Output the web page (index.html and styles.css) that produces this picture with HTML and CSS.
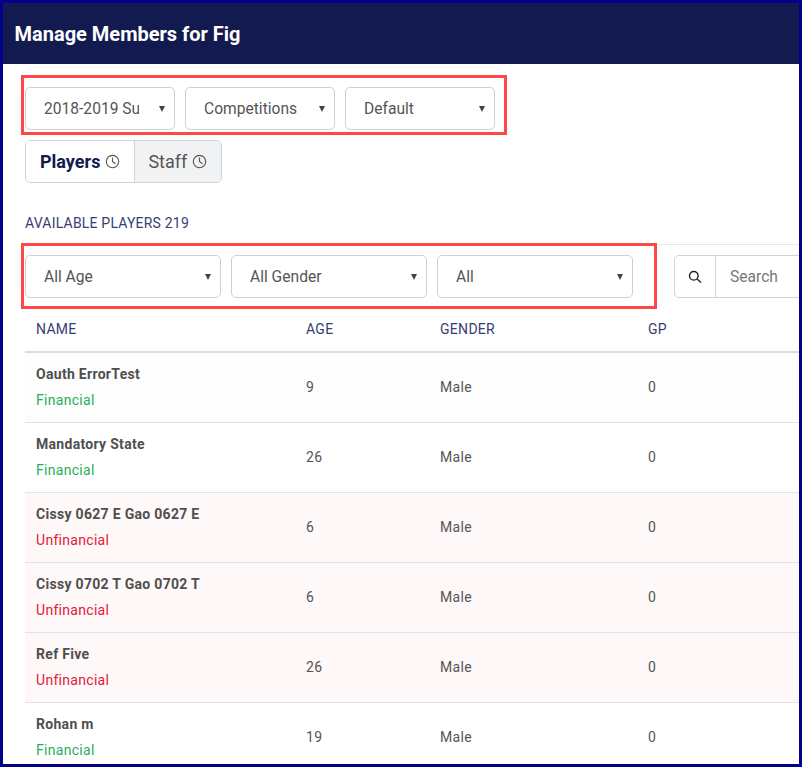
FILE: index.html
```html
<!DOCTYPE html>
<html lang="en">
<head>
<meta charset="utf-8">
<title>Manage Members for Fig</title>
<link rel="stylesheet" href="styles.css">
</head>
<body>
<div class="frame">
  <header class="topbar"><h1 class="title">Manage Members for Fig</h1></header>
  <main class="content">
    <div class="select-row marked marked-top">
      <div class="select w150"><span class="select-text">2018-2019 Summer</span><i class="caret"></i></div>
      <div class="select w150"><span class="select-text">Competitions</span><i class="caret"></i></div>
      <div class="select w150"><span class="select-text">Default</span><i class="caret"></i></div>
    </div>
    <div class="tabs">
      <div class="tab tab-active">Players
        <svg class="clock" viewBox="0 0 16 16"><circle cx="8" cy="8" r="6.6"/><path d="M8 3.8V8l3.2 2.4"/></svg>
      </div>
      <div class="tab tab-muted">Staff
        <svg class="clock" viewBox="0 0 16 16"><circle cx="8" cy="8" r="6.6"/><path d="M8 3.8V8l3.2 2.4"/></svg>
      </div>
    </div>
    <div class="section-label">AVAILABLE PLAYERS 219</div>
    <div class="filters">
      <div class="select-row marked marked-filter">
        <div class="select w196"><span class="select-text">All Age</span><i class="caret"></i></div>
        <div class="select w196"><span class="select-text">All Gender</span><i class="caret"></i></div>
        <div class="select w196"><span class="select-text">All</span><i class="caret"></i></div>
      </div>
      <div class="search">
        <div class="search-icon">
          <svg viewBox="0 0 16 16" width="16" height="16"><circle cx="6.8" cy="6.8" r="4.3"/><path d="M10 10l4 3.6"/></svg>
        </div>
        <div class="search-input">Search</div>
      </div>
    </div>
    <table class="members">
      <thead>
        <tr><th class="c-name">NAME</th><th class="c-age">AGE</th><th class="c-gender">GENDER</th><th class="c-gp">GP</th></tr>
      </thead>
      <tbody>
        <tr class="row-ok"><td><div class="person">Oauth ErrorTest</div><div class="fin">Financial</div></td><td>9</td><td>Male</td><td>0</td></tr>
        <tr class="row-plain"><td><div class="person">Mandatory State</div><div class="fin">Financial</div></td><td>26</td><td>Male</td><td>0</td></tr>
        <tr class="row-bad"><td><div class="person">Cissy 0627 E Gao 0627 E</div><div class="unfin">Unfinancial</div></td><td>6</td><td>Male</td><td>0</td></tr>
        <tr class="row-bad"><td><div class="person">Cissy 0702 T Gao 0702 T</div><div class="unfin">Unfinancial</div></td><td>6</td><td>Male</td><td>0</td></tr>
        <tr class="row-bad"><td><div class="person">Ref Five</div><div class="unfin">Unfinancial</div></td><td>26</td><td>Male</td><td>0</td></tr>
        <tr class="row-plain"><td><div class="person">Rohan m</div><div class="fin">Financial</div></td><td>19</td><td>Male</td><td>0</td></tr>
      </tbody>
    </table>
  </main>
</div>
</body>
</html>
```
FILE: styles.css
```css
* { box-sizing: border-box; }
html, body { margin: 0; padding: 0; background: #fff; }
body { font-family: Roboto, "Liberation Sans", sans-serif; color: #555; }
.frame { width: 802px; height: 767px; border: 3px solid #03038a; overflow: hidden; background: #fff; }
.topbar { height: 61px; background: #131a50; display: flex; align-items: center; padding: 0 11.5px; }
.title { margin: 0; font-size: 20px; font-weight: 700; color: #fff; }
.content { padding: 23px 0 0 22px; width: 900px; }
.select-row { display: flex; gap: 10px; position: relative; }
.marked::after { content: ""; box-sizing: border-box; position: absolute; border: 3px solid #ff4747; pointer-events: none; }
.marked-top { width: 470px; }
.marked-top::after { left: -4px; top: -12px; width: 486px; height: 60px; }
.marked-filter::after { left: -4px; top: -12px; width: 636px; height: 66px; }
.select { height: 43px; border: 1px solid #ced0d4; border-radius: 5px; background: #fff; display: flex; align-items: center; padding: 0 9px 0 18px; font-size: 15.6px; color: #555; }
.w150 { width: 150px; }
.w196 { width: 196px; }
.select-text { flex: 1; min-width: 0; overflow: hidden; white-space: nowrap; margin-right: 20px; }
.caret { flex: none; width: 0; height: 0; border-left: 3.5px solid transparent; border-right: 3.5px solid transparent; border-top: 6px solid #444; }
.tabs { display: inline-flex; margin-top: 10px; height: 43px; border: 1px solid #ced4da; border-radius: 5px; overflow: hidden; vertical-align: top; }
.tab { display: flex; align-items: center; gap: 5px; font-size: 18px; }
.tab-active { padding: 0 14px; color: #131a50; font-weight: 700; background: #fff; border-right: 1px solid #ced4da; }
.tab-muted { padding: 0 14px 0 13px; color: #555; background: #f1f2f3; }
.clock { width: 15px; height: 15px; fill: none; stroke: #555; stroke-width: 1.2; }
.section-label { margin-top: 32px; font-size: 14px; line-height: 17px; color: #383d74; letter-spacing: 0.2px; }
.filters { margin-top: 12px; border-top: 1px solid #e6e7e9; padding-top: 10px; display: flex; }
.search { margin-left: 41px; display: flex; height: 43px; border: 1px solid #ced4da; border-radius: 5px 0 0 5px; width: 300px; }
.search-icon { width: 41px; display: flex; align-items: center; justify-content: center; border-right: 1px solid #ced4da; }
.search-icon svg { fill: none; stroke: #222; stroke-width: 1.4; }
.search-input { padding-left: 14px; font-size: 15.6px; line-height: 42px; color: #777; }
.members { border-collapse: collapse; table-layout: fixed; width: 775px; margin-top: 10px; font-size: 14px; letter-spacing: 0.3px; }
.members th { height: 44px; padding: 0 11px 2px; text-align: left; font-size: 14px; font-weight: 400; color: #383d74; border-bottom: 2px solid #ddd; }
.c-name { width: 270px; }
.c-age { width: 134px; }
.c-gender { width: 208px; }
.members td { height: 70px; padding: 0 11px; border-bottom: 1px solid #e2e2e2; color: #555; vertical-align: middle; }
.person { font-weight: 700; line-height: 20px; color: #4f4f4f; }
.fin, .unfin { margin-top: 6px; line-height: 20px; }
.fin { color: #1fb058; }
.unfin { color: #e01a38; }
.row-ok { background: #fdfdfd; }
.row-plain { background: #fff; }
.row-bad { background: #fef8f8; }
```
